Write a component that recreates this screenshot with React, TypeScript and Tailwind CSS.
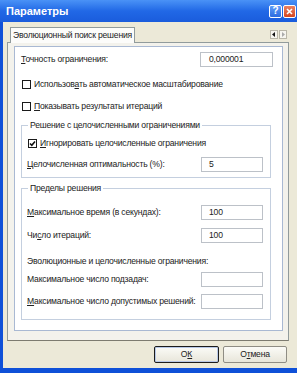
import React from 'react';

const Acc = ({ text, at }: { text: string; at?: number }) =>
  at === undefined ? (
    <>{text}</>
  ) : (
    <>
      {text.slice(0, at)}
      <span className="underline underline-offset-1">{text[at]}</span>
      {text.slice(at + 1)}
    </>
  );

const TextBox = ({ value }: { value?: string }) => (
  <div className="flex h-[15px] w-[62px] items-center border border-[#bcc1c8] bg-white pl-[7px] text-[#222]">
    {value}
  </div>
);

const CheckBox = ({ checked }: { checked?: boolean }) => (
  <div className="flex h-[9px] w-[9px] shrink-0 items-center justify-center border border-[#1a1a1a] bg-white">
    {checked && (
      <svg width="7" height="7" viewBox="0 0 7 7">
        <path d="M1 3.5 L2.8 5.3 L6 1.5" stroke="#111" strokeWidth="1.6" fill="none" />
      </svg>
    )}
  </div>
);

const Group = ({ title, children, className }: { title: string; children: React.ReactNode; className?: string }) => (
  <fieldset className={`ml-[6px] mr-[11px] border border-[#c4cfdf] ${className ?? ''}`}>
    <legend className="ml-[6px] whitespace-nowrap px-[2px] leading-[12px] text-[#222]">{title}</legend>
    {children}
  </fieldset>
);

export default function App() {
  return (
    <div className="flex h-[373px] w-[297px] flex-col overflow-hidden whitespace-nowrap bg-[#ece9d8] font-['Liberation_Sans',Arial,sans-serif] text-[8.6px] tracking-[-0.2px] text-[#222]">
      {/* Title bar */}
      <div className="flex h-[22px] shrink-0 items-center bg-linear-to-b from-[#4a92f6] via-[#2168e6] to-[#1a5cdc] pl-[6px] pr-[1px] tracking-normal">
        <span className="text-[11px] font-bold text-white">Параметры</span>
        <div className="ml-auto flex gap-[1px]">
          <div className="flex h-[13px] w-[13px] items-center justify-center rounded-[2px] border border-white bg-linear-to-b from-[#5f9cf7] to-[#2c6be0] text-[10px] font-bold leading-none text-white">
            ?
          </div>
          <div className="flex h-[13px] w-[13px] items-center justify-center rounded-[2px] border border-white bg-linear-to-b from-[#e9805f] to-[#d4451f]">
            <svg width="7" height="7" viewBox="0 0 7 7">
              <path d="M1 1 L6 6 M6 1 L1 6" stroke="white" strokeWidth="1.6" />
            </svg>
          </div>
        </div>
      </div>

      {/* Body */}
      <div className="flex flex-1 flex-col border-b-[5px] border-l-[3px] border-[#0f50d8]">
        <div className="ml-[4px] w-[282px]">
          {/* Tab strip */}
          <div className="flex h-[20px] items-start">
            <div className="relative z-10 -mb-px ml-[3px] mt-[5px] flex h-[16px] w-[125px] items-center justify-center border border-b-0 border-[#919b9c] bg-[#fcfcfa]">
              Эволюционный поиск решения
            </div>
            <div className="ml-auto mr-[2px] mt-[8px] flex">
              <div className="flex h-[9px] w-[8px] items-center justify-center border border-[#b9b6a8] bg-[#f6f5ef]">
                <svg width="4" height="5" viewBox="0 0 4 5"><path d="M3 0 L0 2.5 L3 5 Z" fill="#111" /></svg>
              </div>
              <div className="ml-px flex h-[9px] w-[8px] items-center justify-center border border-[#b9b6a8] bg-[#f6f5ef]">
                <svg width="4" height="5" viewBox="0 0 4 5"><path d="M1 0 L4 2.5 L1 5 Z" fill="#aaa" /></svg>
              </div>
            </div>
          </div>

          {/* Tab pane */}
          <div className="h-[299px] border border-[#919b9c] border-b-[#7d7b70] bg-[#f3f2ec] pb-[11px] pl-[6px] pr-[5px] pt-[3px]">
            <div className="flex flex-col border border-[#a9b9d3] bg-white pb-[10px]">
              <div className="mt-[5px] flex h-[15px] items-center justify-between pl-[6px] pr-[9px]">
                <span><Acc text="Точность ограничения:" at={0} /></span>
                <div className="flex h-[15px] w-[73px] items-center border border-[#bcc1c8] bg-white pl-[8px]">0,000001</div>
              </div>

              <div className="ml-[7px] mt-[11px] flex h-[12px] items-center gap-[3px]">
                <CheckBox />
                <span><Acc text="Использовать автоматическое масштабирование" at={9} /></span>
              </div>
              <div className="ml-[7px] mt-[10px] flex h-[12px] items-center gap-[3px]">
                <CheckBox />
                <span><Acc text="Показывать результаты итераций" at={0} /></span>
              </div>

              <Group title="Решение с целочисленными ограничениями" className="mt-[7px] pb-[5px]">
                <div className="ml-[6px] mt-[6px] flex h-[12px] items-center gap-[3px]">
                  <CheckBox checked />
                  <span><Acc text="Игнорировать целочисленные ограничения" at={0} /></span>
                </div>
                <div className="mt-[8px] flex items-center justify-between pl-[5px] pr-[7px]">
                  <span><Acc text="Целочисленная оптимальность (%):" at={0} /></span>
                  <TextBox value="5" />
                </div>
              </Group>

              <Group title="Пределы решения" className="mt-[4px] pb-[10px]">
                <div className="mt-[11px] flex items-center justify-between pl-[5px] pr-[7px]">
                  <span><Acc text="Максимальное время (в секундах):" at={0} /></span>
                  <TextBox value="100" />
                </div>
                <div className="mt-[8px] flex items-center justify-between pl-[5px] pr-[7px]">
                  <span><Acc text="Число итераций:" at={2} /></span>
                  <TextBox value="100" />
                </div>
                <div className="mt-[12px] flex h-[12px] items-center pl-[5px]">
                  Эволюционные и целочисленные ограничения:
                </div>
                <div className="mt-[5px] flex items-center justify-between pl-[5px] pr-[7px]">
                  <span>Максимальное число подзадач:</span>
                  <TextBox />
                </div>
                <div className="mt-[7px] flex items-center justify-between pl-[5px] pr-[7px]">
                  <span><Acc text="Максимальное число допустимых решений:" at={0} /></span>
                  <TextBox />
                </div>
              </Group>
            </div>
          </div>
        </div>

        {/* Buttons */}
        <div className="flex justify-end gap-[4px] pr-[10px] pt-[5px]">
          <button className="flex h-[17px] w-[65px] items-center justify-center rounded-[2px] border border-[#1c1c1c] bg-linear-to-b from-[#fbfbf7] to-[#e8e6da] shadow-[inset_0_0_0_1px_#b8c8e6]">
            <span><Acc text="ОК" at={1} /></span>
          </button>
          <button className="flex h-[17px] w-[64px] items-center justify-center rounded-[2px] border border-[#8f8d84] bg-linear-to-b from-[#fbfbf7] to-[#e8e6da]">
            <span><Acc text="Отмена" at={1} /></span>
          </button>
        </div>
      </div>
    </div>
  );
}
